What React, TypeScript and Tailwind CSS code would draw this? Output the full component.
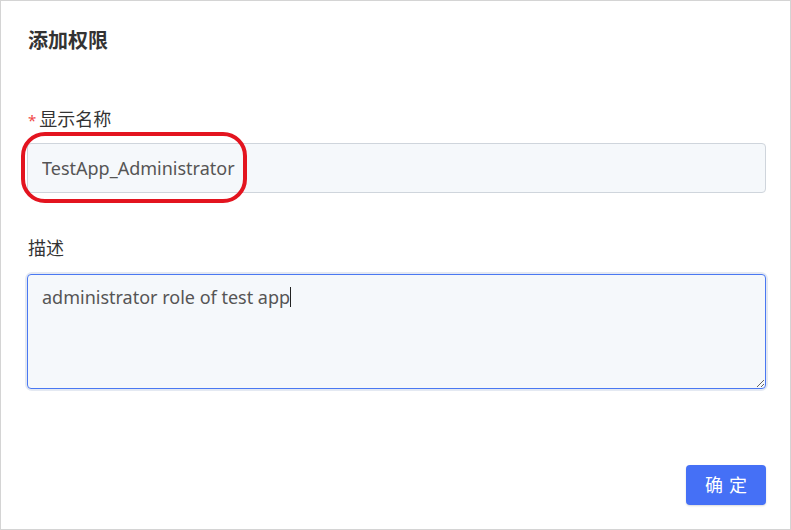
import React from "react";

export default function App() {
  return (
    <div
      className="w-[791px] h-[530px] bg-white border border-[#d4d4d4] box-border relative"
      style={{ fontFamily: '"Noto Sans", "Noto Sans CJK SC", sans-serif' }}
    >
      <div className="pl-[26px] pr-[24px] pt-[27px] flex flex-col">
        <h1 className="text-[20px] leading-[26px] font-bold text-[#333] pl-[1px]">添加权限</h1>

        <div className="mt-[53px] flex items-center h-[24px] text-[18px] text-[#333] pl-[1px]">
          <span className="text-[#f04848] mr-[3px] text-[15px] leading-none mt-[3px]">*</span>
          <span>显示名称</span>
        </div>
        <div className="mt-[12px] relative">
          <input
            readOnly
            value="TestApp_Administrator"
            className="w-full h-[50px] box-border rounded-[4px] border border-[#cfd5dc] bg-[#f5f8fb] px-[14px] text-[18px] text-[#555] outline-none"
          />
          <div className="absolute left-[-6px] top-[-11px] w-[226px] h-[71px] rounded-[24px] border-[4px] border-[#e3141f] pointer-events-none" />
        </div>

        <div className="mt-[43px] h-[24px] flex items-center text-[18px] text-[#333] pl-[1px]">描述</div>
        <div className="mt-[14px] rounded-[5px] ring-[2px] ring-[#e4e9f2]">
          <div className="block w-full h-[115px] box-border rounded-[4px] border border-[#4a78f2] bg-[#f5f8fb] px-[14px] py-[8px] text-[18px] leading-[28px] text-[#555] overflow-auto resize-y">
            administrator role of test app
            <span className="inline-block w-[1px] h-[20px] bg-[#222] align-[-3px]" />
          </div>
        </div>

        <div className="mt-[76px] flex justify-end">
          <button className="w-[80px] h-[40px] rounded-[4px] bg-[#4570f6] text-white text-[18px] tracking-[6px] pl-[6px] shadow-[0_1px_2px_rgba(0,0,0,0.15)]">
            确定
          </button>
        </div>
      </div>
    </div>
  );
}
